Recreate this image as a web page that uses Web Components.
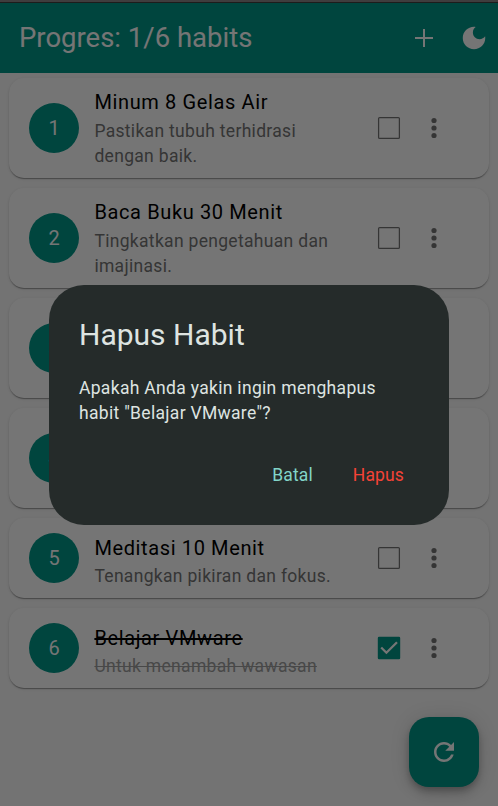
<!DOCTYPE html>
<html lang="id">
<head>
<meta charset="utf-8">
<title>Habits</title>
<style>
html,body{margin:0;height:100%;overflow:hidden;background:#3f3d3e}
body{font-family:Roboto,"Noto Sans",sans-serif}
</style>
</head>
<body>
<habit-app></habit-app>
<script>
const define = (name, html, setup) => customElements.define(name, class extends HTMLElement {
  constructor() {
    super();
    this.attachShadow({ mode: 'open' }).innerHTML = html;
  }
  connectedCallback() { if (setup) setup(this, this.shadowRoot); }
});

define('app-header', `
<style>
:host{display:flex;align-items:center;box-sizing:border-box;height:70px;flex:none;background:#009688;color:#fff;padding:0 9px 0 19px}
.title{flex:1;font-size:27.5px;line-height:35px;white-space:nowrap;padding-bottom:2px}
svg{display:block;width:30px;height:30px;fill:currentColor}
.actions{display:flex;gap:20px}
</style>
<div class="title"><slot></slot></div>
<div class="actions">
<svg viewBox="0 0 30 30"><path d="M24 16h-8v8h-2v-8H6v-2h8V6h2v8h8z"/></svg>
<svg viewBox="0 0 24 24"><path d="M12 3c-4.970 0-9 4.030-9 9s4.030 9 9 9 9-4.030 9-9c0-.46-.04-.92-.1-1.360-.98 1.370-2.580 2.260-4.400 2.260-2.980 0-5.400-2.420-5.400-5.400 0-1.810.89-3.420 2.260-4.400-.44-.06-.9-.1-1.360-.1z"/></svg>
</div>`);

define('check-box', `
<style>
:host{display:block;width:22px;height:22px}
svg{display:block;width:100%;height:100%;overflow:visible}
.on{display:none}
:host([checked]) .on{display:block}
:host([checked]) .off{display:none}
</style>
<svg viewBox="0 0 22 22">
<rect class="off" x=".6" y=".6" width="20.800" height="20.800" rx="1" fill="none" stroke="#757575" stroke-width="1.250"/>
<g class="on"><rect x="-.2" y="-.2" width="22.400" height="22.400" rx="1.300" fill="#009688"/><path d="M3.200 10.500l5.200 5.200L19 5.200" fill="none" stroke="#fff" stroke-width="2.300"/></g>
</svg>`);

define('habit-card', `
<style>
:host{display:flex;align-items:center;box-sizing:border-box;height:100px;border-radius:15px;background:#fff;padding:0 49px 0 20px;
box-shadow:0 2px 1px -1px rgba(0,0,0,.2),0 1px 1px rgba(0,0,0,.14),0 1px 3px rgba(0,0,0,.12)}
:host([compact]){height:80px}
.num{width:50px;height:50px;border-radius:50%;background:#009688;color:#fff;font-size:20px;line-height:50px;text-align:center;flex:none}
.text{flex:1;margin-left:15.400px;min-width:0}
:host([compact]) .text{padding-top:5px}
.title{font-size:20px;line-height:30px;letter-spacing:.625px;color:#000;white-space:nowrap}
:host(:not([compact])) .title{margin-top:-1px;padding-bottom:1px}
.sub{font-size:17.500px;line-height:25px;letter-spacing:.3125px;color:#757575;white-space:nowrap;padding-top:1px;margin-bottom:-1px}
:host(:not([compact])) .sub{margin-bottom:-1px}
:host([done]) .title,:host([done]) .sub{text-decoration:line-through}
:host([done]) .sub{color:#9e9e9e}
check-box{margin-right:28px}
svg{display:block;width:12px;height:24px;fill:#757575}
</style>
<div class="num"></div>
<div class="text"><div class="title"><slot name="title"></slot></div><div class="sub"><slot></slot></div></div>
<check-box></check-box>
<svg viewBox="0 0 12 24"><circle cx="6" cy="4.500" r="2.600"/><circle cx="6" cy="12" r="2.600"/><circle cx="6" cy="19.500" r="2.600"/></svg>`,
(el, root) => {
  root.querySelector('.num').textContent = el.getAttribute('number');
  if (el.hasAttribute('done')) root.querySelector('check-box').setAttribute('checked', '');
});

define('refresh-button', `
<style>
:host{display:grid;place-items:center;width:70px;height:70px;border-radius:20px;background:#009688;color:#fff;
box-shadow:0 4px 6px -1px rgba(0,0,0,.2),0 7px 12px rgba(0,0,0,.14),0 1px 20px rgba(0,0,0,.12)}
svg{width:30px;height:30px;fill:currentColor}
</style>
<svg viewBox="0 0 24 24"><path d="M17.650 6.350C16.200 4.900 14.210 4 12 4c-4.420 0-7.990 3.580-7.990 8s3.570 8 7.990 8c3.730 0 6.840-2.550 7.730-6h-2.080c-.82 2.330-3.040 4-5.650 4-3.310 0-6-2.690-6-6s2.690-6 6-6c1.660 0 3.140.69 4.220 1.780L13 11h7V4l-2.350 2.350z"/></svg>`);

define('confirm-dialog', `
<style>
:host{display:block;box-sizing:border-box;width:400px;height:240px;padding:30px;border-radius:35px;background:#252b2a;color:#dee4e1}
.title{font-size:30px;line-height:40px}
.body{margin-top:21px;font-size:17.500px;line-height:25px;letter-spacing:.3125px}
.actions{display:flex;justify-content:flex-end;gap:40px;margin-top:37px;padding-right:15px;font-size:17.500px;line-height:25px;letter-spacing:.125px}
.cancel{color:#82d5c8}.delete{color:#f44336}
</style>
<div class="title"><slot name="title"></slot></div>
<div class="body"><slot></slot></div>
<div class="actions"><span class="cancel">Batal</span><span class="delete">Hapus</span></div>`);

define('habit-app', `
<style>
:host{display:flex;flex-direction:column;box-sizing:border-box;height:806px;padding-top:3px;position:relative}
main{flex:1;background:#fafafa;display:flex;flex-direction:column;gap:10px;padding:5px 9px}
habit-card{flex:none}
refresh-button{position:absolute;left:409px;top:717px}
.scrim{position:absolute;inset:2px 0 0;background:rgba(0,0,0,.541)}
confirm-dialog{position:absolute;left:49px;top:285px}
</style>
<app-header>Progres: 1/6 habits</app-header>
<main>
<habit-card number="1"><span slot="title">Minum 8 Gelas Air</span>Pastikan tubuh terhidrasi<br>dengan baik.</habit-card>
<habit-card number="2"><span slot="title">Baca Buku 30 Menit</span>Tingkatkan pengetahuan dan<br>imajinasi.</habit-card>
<habit-card number="3"></habit-card>
<habit-card number="4"></habit-card>
<habit-card number="5" compact><span slot="title">Meditasi 10 Menit</span>Tenangkan pikiran dan fokus.</habit-card>
<habit-card number="6" compact done><span slot="title">Belajar VMware</span>Untuk menambah wawasan</habit-card>
</main>
<refresh-button></refresh-button>
<div class="scrim"></div>
<confirm-dialog><span slot="title">Hapus Habit</span>Apakah Anda yakin ingin menghapus<br>habit "Belajar VMware"?</confirm-dialog>`);
</script>
</body>
</html>
